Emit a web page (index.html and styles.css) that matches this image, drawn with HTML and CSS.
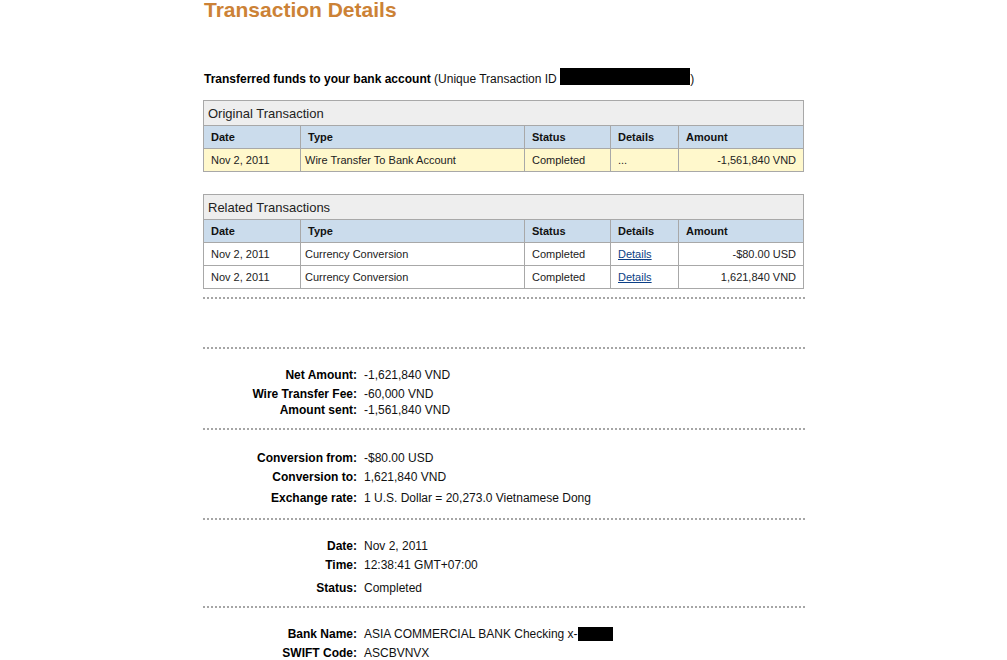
FILE: index.html
```html
<!DOCTYPE html>
<html lang="en">
<head>
<meta charset="utf-8">
<title>Transaction Details</title>
<link rel="stylesheet" href="styles.css">
</head>
<body>
<div class="page">
  <h1 class="title">Transaction Details</h1>

  <p class="intro"><strong>Transferred funds to your bank account</strong> (Unique Transaction ID <span class="redact redact-id"></span>)</p>

  <table class="txn">
    <colgroup>
      <col class="c-date"><col class="c-type"><col class="c-status"><col class="c-details"><col class="c-amount">
    </colgroup>
    <tr class="cap-row"><th colspan="5">Original Transaction</th></tr>
    <tr class="head-row"><th>Date</th><th>Type</th><th>Status</th><th>Details</th><th>Amount</th></tr>
    <tr class="data-row hl"><td>Nov 2, 2011</td><td class="type">Wire Transfer To Bank Account</td><td>Completed</td><td>...</td><td class="amt">-1,561,840 VND</td></tr>
  </table>

  <table class="txn related">
    <colgroup>
      <col class="c-date"><col class="c-type"><col class="c-status"><col class="c-details"><col class="c-amount">
    </colgroup>
    <tr class="cap-row"><th colspan="5">Related Transactions</th></tr>
    <tr class="head-row"><th>Date</th><th>Type</th><th>Status</th><th>Details</th><th>Amount</th></tr>
    <tr class="data-row"><td>Nov 2, 2011</td><td class="type">Currency Conversion</td><td>Completed</td><td><a href="#">Details</a></td><td class="amt">-$80.00 USD</td></tr>
    <tr class="data-row"><td>Nov 2, 2011</td><td class="type">Currency Conversion</td><td>Completed</td><td><a href="#">Details</a></td><td class="amt">1,621,840 VND</td></tr>
  </table>

  <div class="divider first"></div>
  <div class="spacer"></div>
  <div class="divider"></div>

  <dl class="section">
    <div class="row"><dt>Net Amount:</dt><dd>-1,621,840 VND</dd></div>
    <div class="row"><dt>Wire Transfer Fee:</dt><dd>-60,000 VND</dd></div>
    <div class="row gap-s"><dt>Amount sent:</dt><dd>-1,561,840 VND</dd></div>
  </dl>
  <div class="divider"></div>

  <dl class="section sec-conv">
    <div class="row"><dt>Conversion from:</dt><dd>-$80.00 USD</dd></div>
    <div class="row"><dt>Conversion to:</dt><dd>1,621,840 VND</dd></div>
    <div class="row gap-m"><dt>Exchange rate:</dt><dd>1 U.S. Dollar = 20,273.0 Vietnamese Dong</dd></div>
  </dl>
  <div class="divider"></div>

  <dl class="section">
    <div class="row"><dt>Date:</dt><dd>Nov 2, 2011</dd></div>
    <div class="row"><dt>Time:</dt><dd>12:38:41 GMT+07:00</dd></div>
    <div class="row gap-l"><dt>Status:</dt><dd>Completed</dd></div>
  </dl>
  <div class="divider"></div>

  <dl class="section">
    <div class="row"><dt>Bank Name:</dt><dd>ASIA COMMERCIAL BANK Checking x-<span class="redact redact-acct"></span></dd></div>
    <div class="row"><dt>SWIFT Code:</dt><dd>ASCBVNVX</dd></div>
  </dl>
</div>
</body>
</html>
```
FILE: styles.css
```css
html, body {
  margin: 0;
  padding: 0;
  background: #fff;
}

body {
  font-family: "Liberation Sans", Arial, sans-serif;
  color: #111;
}

.page {
  width: 602px;
  margin-left: 203px;
}

.title {
  margin: 0;
  padding-left: 1px;
  font-size: 21px;
  line-height: 20px;
  font-weight: bold;
  color: #cc8236;
}

.intro {
  margin: 48px 0 0 1px;
  font-size: 12px;
  line-height: 14px;
  color: #111;
}

.intro strong {
  color: #000;
}

.redact {
  display: inline-block;
  background: #000;
}

.redact-id {
  width: 130px;
  height: 17px;
  vertical-align: -2px;
}

.redact-acct {
  width: 35px;
  height: 14px;
  vertical-align: -3px;
}

.txn {
  width: 601px;
  margin-top: 14px;
  border-collapse: collapse;
  table-layout: fixed;
  font-size: 11px;
  color: #222;
}

.txn.related {
  margin-top: 22px;
}

.c-date { width: 97px; }
.c-type { width: 224px; }
.c-status { width: 86px; }
.c-details { width: 68px; }
.c-amount { width: 125px; }

.txn th,
.txn td {
  border: 1px solid #a8a8a8;
  padding: 0 7px;
  text-align: left;
  vertical-align: middle;
  white-space: nowrap;
}

.txn td.type {
  padding-left: 4px;
}

.cap-row {
  height: 25px;
}

.cap-row th {
  background: #eeeeee;
  font-size: 13px;
  font-weight: normal;
  color: #222;
  padding-left: 4px;
}

.head-row {
  height: 23px;
}

.head-row th {
  background: #cbdcec;
  font-weight: bold;
  color: #111;
}

.data-row {
  height: 23px;
}

.data-row.hl td {
  background: #fff8cc;
}

.txn td.amt {
  text-align: right;
}

.txn a {
  color: #0b3f86;
  text-decoration: underline;
}

.divider {
  height: 2px;
  background: repeating-linear-gradient(to right, #a6a6a6 0 2px, transparent 2px 4px);
}

.divider.first {
  margin-top: 8px;
}

.spacer {
  height: 48px;
}

.section {
  margin: 0;
  padding: 19px 0 11px;
  font-size: 12px;
  line-height: 14px;
}

.section.sec-conv {
  padding: 21px 0 13px;
}

.row {
  display: grid;
  grid-template-columns: 154px 1fr;
  column-gap: 7px;
}

.row + .row {
  margin-top: 5px;
}

.row.gap-s { margin-top: 2px; }
.row.gap-m { margin-top: 7px; }
.row.gap-l { margin-top: 9px; }

.row dt {
  text-align: right;
  font-weight: bold;
  color: #000;
}

.row dd {
  margin: 0;
  color: #111;
  white-space: nowrap;
}
```
